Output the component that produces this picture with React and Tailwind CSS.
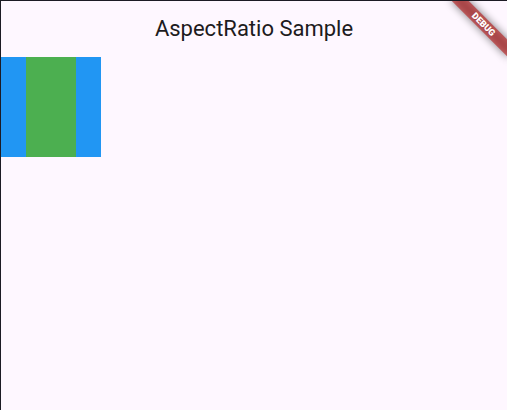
import React from "react";

export default function App() {
  return (
    <div className="relative w-[507px] h-[410px] overflow-hidden bg-[#fef7ff] border-t border-l border-[#1c1b24] font-['Roboto','Liberation_Sans',sans-serif]">
      <div className="h-14 flex items-center justify-center">
        <h1 className="text-[22px] leading-[28px] text-[#1d1b20] font-normal">AspectRatio Sample</h1>
      </div>
      <div className="w-[100px] h-[100px] bg-[#2196f3] flex justify-center">
        <div className="w-[50px] h-full bg-[#4caf50]" />
      </div>

      <div className="absolute left-[466px] top-[27px] w-[80px] h-[12px] origin-[40px_-27px] rotate-45 bg-black/50 blur-[4px]" />
      <div className="absolute left-[466px] top-[27px] w-[80px] h-[12px] origin-[40px_-27px] rotate-45 bg-[#b71c1ca0] flex items-center justify-center">
        <span className="text-white text-[9px] leading-none font-black tracking-normal">DEBUG</span>
      </div>
    </div>
  );
}
